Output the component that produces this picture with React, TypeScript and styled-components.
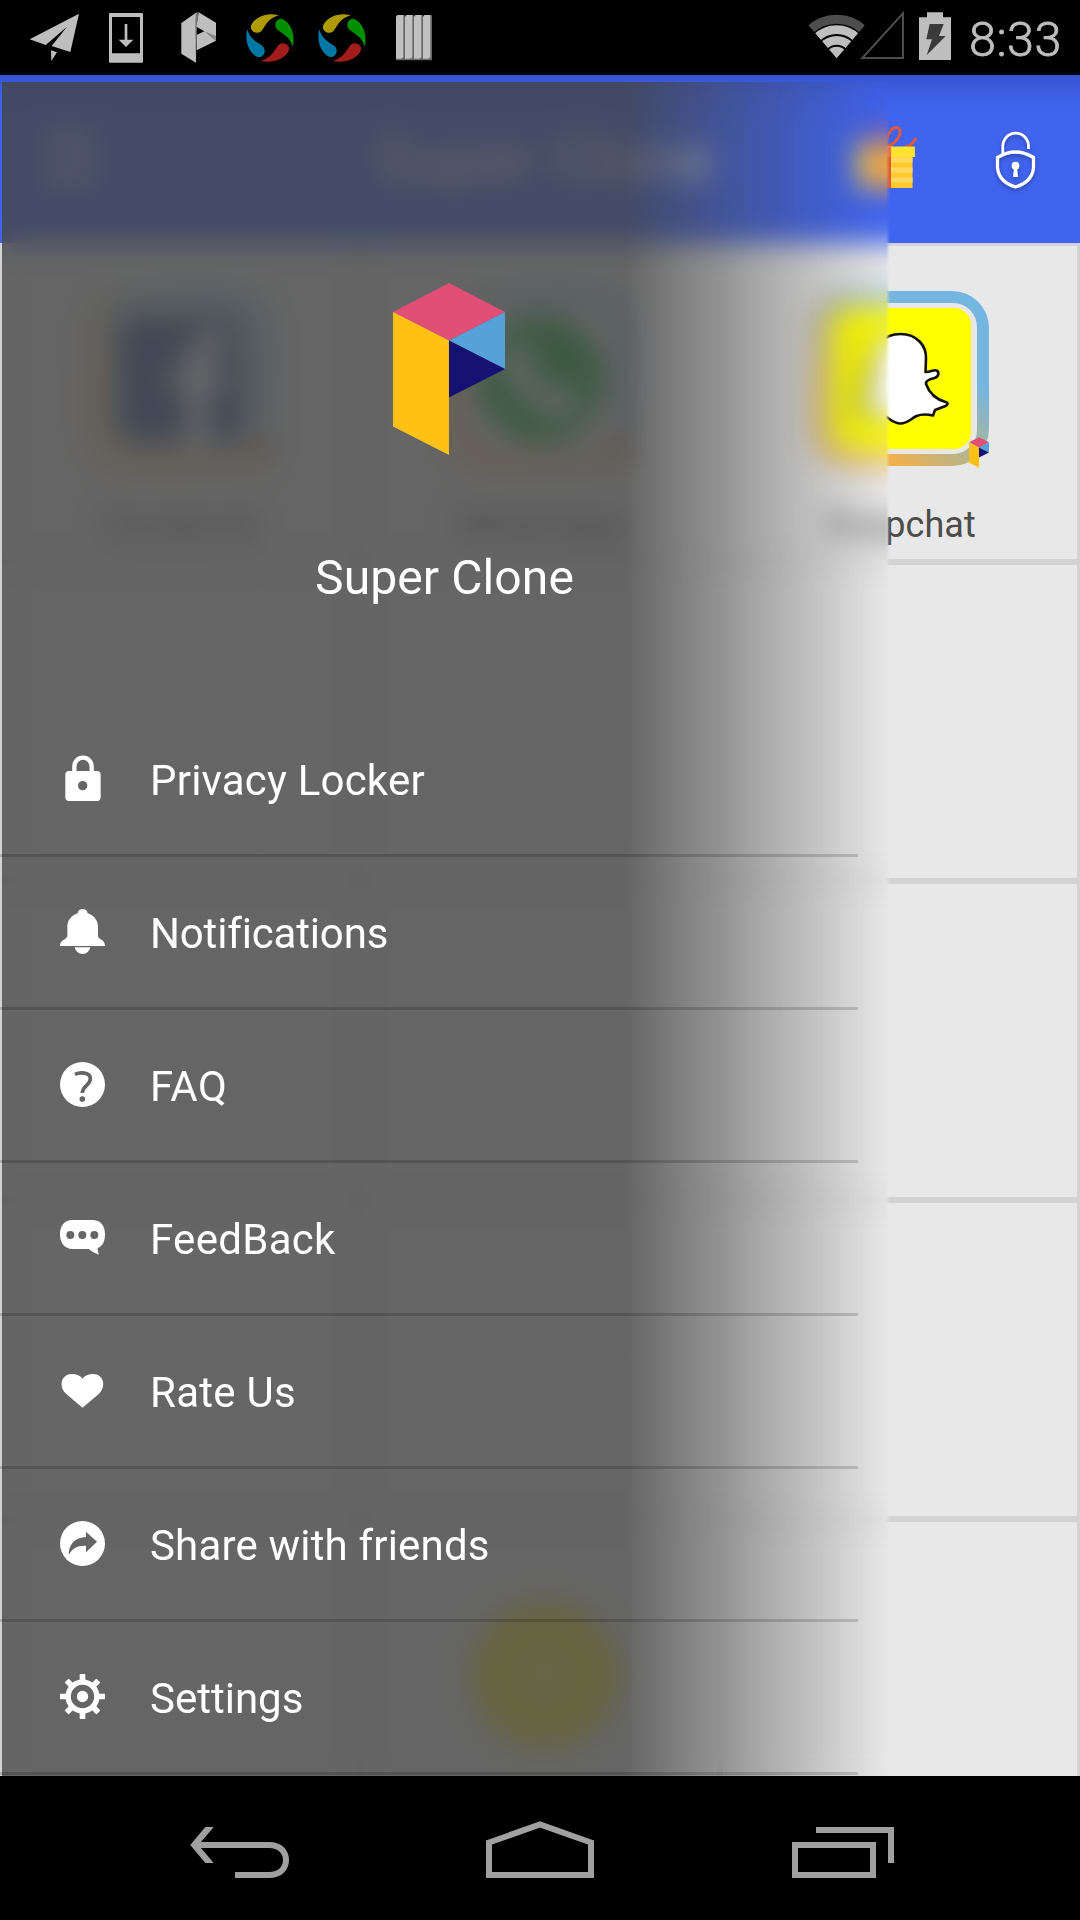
import React from "react";
import styled, { createGlobalStyle } from "styled-components";

const Global = createGlobalStyle`
  * { box-sizing: border-box; }
  body { margin: 0; background: #000; }
`;

const Phone = styled.div`
  width: 1080px;
  height: 1920px;
  display: flex;
  flex-direction: column;
  overflow: hidden;
  background: #000;
  font-family: Roboto, "Noto Sans", sans-serif;
`;

const StatusBar = styled.header`
  height: 75px;
  flex: none;
  display: flex;
  justify-content: space-between;
  padding-right: 20px;
`;

const StatusGroup = styled.div`
  display: flex;
`;

const Clock = styled.div`
  width: 91px;
  font-size: 48.5px;
  line-height: 79px;
  font-weight: 300;
  letter-spacing: 0.5px;
  color: #bebebe;
  -webkit-text-stroke: 0.8px #bebebe;
  white-space: nowrap;
`;

const Glyph = styled.svg`
  display: block;
  flex: none;
  overflow: visible;
`;

const Stage = styled.main`
  position: relative;
  height: 1701px;
  flex: none;
  overflow: hidden;
  background: #e8e8e8;
`;

const AppBar = styled.div`
  height: 168px;
  display: grid;
  grid-template-columns: 346px 1fr 340px;
  align-items: center;
  background: linear-gradient(#3755d0 0, #3e60e8 20px, #4064ef 40px);
`;

const Hamburger = styled.div`
  display: flex;
  flex-direction: column;
  gap: 17px;
  width: 56px;
  margin-left: 42px;
`;

const HamburgerLine = styled.span`
  height: 6px;
  background: #fff;
`;

const AppTitle = styled.h1`
  margin: 0;
  text-align: center;
  font-size: 63px;
  font-weight: 400;
  color: #fff;
`;

const Actions = styled.div`
  display: flex;
  align-items: flex-end;
  gap: 81px;
  padding: 0 0 4px 114px;
`;

const Grid = styled.div`
  display: grid;
  grid-template-columns: repeat(3, 360px);
  grid-auto-rows: 319px;
`;

const Cell = styled.div`
  border: 3px solid #d3d3d3;
  background: #e8e8e8;
  display: flex;
  flex-direction: column;
  align-items: center;
  padding-top: 45px;
`;

const AppFrame = styled.div`
  position: relative;
  width: 177px;
  height: 175px;
  border-radius: 37px;
  padding: 12px;
  display: flex;
  background: linear-gradient(45deg, #efb04f 25%, #a9b59b 52%, #74b6e0 72%);
`;

const FrameInner = styled.div`
  flex: 1;
  display: flex;
  align-items: center;
  justify-content: center;
  border-radius: 24px;
  background: #e8e8e8;
`;

const Tile = styled.div<{ $color: string; $round?: boolean; $scale: number }>`
  width: 141px;
  height: 141px;
  border-radius: ${(p) => (p.$round ? "50%" : "17px")};
  background: ${(p) => p.$color};
  transform: scale(${(p) => p.$scale});
`;

const Badge = styled.div`
  position: absolute;
  right: 0;
  bottom: -2px;
`;

const AppLabel = styled.div`
  margin-top: 38px;
  font-size: 36px;
  line-height: 42px;
  letter-spacing: 0.1px;
  color: #4c4c4c;
`;

const Fab = styled.div`
  position: absolute;
  left: 472px;
  bottom: 28px;
  width: 146px;
  height: 146px;
  border-radius: 50%;
  background: #e8e42a;
  display: flex;
  align-items: center;
  justify-content: center;
`;

const Drawer = styled.aside`
  position: absolute;
  left: 0;
  top: 0;
  width: 888px;
  height: 1701px;
`;

const Frost = styled.div`
  position: absolute;
  left: 2px;
  top: 7px;
  width: 1078px;
  height: 1694px;
  backdrop-filter: blur(14px);
  background: linear-gradient(
    to right,
    rgba(68, 68, 68, 0.8) 624px,
    rgba(68, 68, 68, 0) 886px
  );
  mask-image: linear-gradient(to right, #000 884px, transparent 888px);
`;

const DrawerBody = styled.div`
  position: relative;
  display: flex;
  flex-direction: column;
`;

const DrawerHead = styled.div`
  height: 629px;
  padding: 208px 0 0 1px;
  display: flex;
  flex-direction: column;
  align-items: center;
`;

const LogoSlot = styled.div`
  padding-left: 8px;
`;

const DrawerTitle = styled.div`
  margin-top: 95px;
  font-size: 48px;
  line-height: 56px;
  letter-spacing: 0.1px;
  color: #fff;
`;

const MenuRow = styled.div`
  width: 858px;
  height: 153px;
  display: flex;
  align-items: center;
  padding-left: 60px;
  border-bottom: 3px solid rgba(0, 0, 0, 0.16);
`;

const MenuIcon = styled(Glyph)`
  margin-bottom: 2px;
`;

const MenuText = styled.span<{ $track: number }>`
  margin-left: 45px;
  padding-top: 3px;
  font-size: 42px;
  line-height: 50px;
  letter-spacing: ${(p) => p.$track}px;
  color: #fff;
  white-space: nowrap;
`;

const NavBar = styled.nav`
  height: 144px;
  flex: none;
  display: flex;
  padding: 0 90px;
`;

const NavButton = styled.div`
  width: 300px;
  display: flex;
  align-items: center;
  justify-content: center;
`;

const Logo = ({ w, h }: { w: number; h: number }) => (
  <Glyph width={w} height={h} viewBox="393 283 112 172">
    <path fill="#e24f76" d="M449 283L505 312L449 340.5L393 312Z" />
    <path fill="#56a1da" d="M505 312V369L449 340.5Z" />
    <path fill="#151273" d="M449 340.5L505 369L449 397.5Z" />
    <path fill="#ffc214" d="M393 312L449 340.5V455L393 426.5Z" />
  </Glyph>
);

const drop =
  "M836 46C806 37 766 48 753 77C749 94 772 106 785 92C799 75 803 56 836 46Z";

const Swirl = ({ x }: { x: number }) => (
  <g transform={`translate(${x} 0)`}>
    {["#af9a00", "#008f00", "#a31c1c", "#0078a6"].map((c, i) => (
      <path key={c} d={drop} fill={c} transform={`rotate(${i * 90} 810 114)`} />
    ))}
  </g>
);

const NoticeIcons = () => (
  <Glyph width="460" height="75" viewBox="0 0 1380 225">
    <g fill="#bebebe">
      <path d="M89 118L237 41L211 156L155 138L201 80L137 135Z" />
      <path d="M153 151L171 157L154 183Z" />
      <path
        fillRule="evenodd"
        d="M330 39H426Q429 39 429 42V185Q429 188 426 188H330Q327 188 327 185V42Q327 39 330 39ZM336 51V160H420V51Z"
      />
      <path d="M374 72H382V119H400L378 141L356 119H374Z" />
      <path d="M544 69L590 37L588 188L544 161Z" />
      <path d="M596 37L648 68V122L590 151V105L613 94L589 80Z" />
    </g>
    <path fill="#777" d="M588 38L597 37L589 80L587 188L586 60Z" />
    <path fill="#888" d="M613 94L648 108V124Z" />
    <Swirl x={0} />
    <Swirl x={216} />
    {[0, 1, 2, 3].map((i) => (
      <g key={i} transform={`translate(${1188 + i * 27} 0)`}>
        <path fill="#666" d="M2 45H25L27 48V181H0V173Z" />
        <path fill="#c0c0c0" d="M0 50L5 45H22V172L16 176H0Z" />
      </g>
    ))}
  </Glyph>
);

const SystemIcons = () => (
  <Glyph width="189" height="75" viewBox="0 0 567 225">
    <clipPath id="fan">
      <path d="M170 175L66 53V0H274V53Z" />
    </clipPath>
    <g clipPath="url(#fan)" fill="none">
      <circle cx="170" cy="175" r="117.5" stroke="#4d4d4d" strokeWidth="27" />
      <circle cx="170" cy="175" r="86" stroke="#bebebe" strokeWidth="26" />
      <circle cx="170" cy="175" r="54" stroke="#bebebe" strokeWidth="26" />
      <circle cx="170" cy="175" r="35" fill="#bebebe" />
    </g>
    <path d="M247 174H369V40Z" fill="none" stroke="#4d4d4d" strokeWidth="6" />
    <path fill="#bebebe" d="M441 37H489V52H513V180H417V52H441Z" />
    <path fill="#3a3a3a" d="M449 72H491L477 108H497L440 166L456 118H439Z" />
  </Glyph>
);

const Gift = () => (
  <Glyph width="60" height="70" viewBox="854 122 60 70">
    <path
      d="M885 147C887 136 891 127 897 127.500C904 129 899 144 885 147C881 136 878 127 873 128C866 132 874 145 885 147M905 147Q913 145 916 138M865 147Q857 144 855 138"
      fill="none"
      stroke="#e8573c"
      strokeWidth="2.800"
    />
    <rect x="858" y="157" width="54.500" height="31" fill="#ffca2c" />
    <path stroke="#ffd862" strokeWidth="5" d="M858 160H912.500M858 170H912.500M858 180H912.500" />
    <rect x="855" y="146.500" width="60" height="10.500" fill="#ffe32c" />
    <path fill="#f96a4a" d="M880 146.500H891V157H880Z" />
    <path fill="#e2562f" d="M880 157H891V188H880Z" />
  </Glyph>
);

const LockGlyph = styled(Glyph)`
  margin-bottom: 3px;
  filter: drop-shadow(0 2px 2px rgba(0, 0, 0, 0.3));
`;

const ShieldLock = () => (
  <LockGlyph width="42" height="58" viewBox="995 131 42 58">
    <g fill="none" stroke="#fff">
      <path
        d="M1002.800 155V146.500A12.800 13 0 0 1 1028.500 146V149"
        strokeWidth="2.800"
      />
      <path
        d="M997.500 157.500Q1015.500 146.500 1033.500 157.500V168Q1032 182 1015.500 187Q999 182 997.500 168Z"
        strokeWidth="3.300"
      />
    </g>
    <circle cx="1015.500" cy="165.700" r="3.900" fill="#fff" />
    <path fill="#fff" d="M1014 167H1017L1018 177H1013Z" />
  </LockGlyph>
);

const Ghost = () => (
  <Glyph width="141" height="141" viewBox="829.5 307.500 141 141">
    <path
      d="M900 333.500C917 333.500 926 346 925.500 358L925 371.500C929 372 932 369.500 935 369.800C939 370.500 939 376 934 377.500C929 378.500 925 380 925.500 383.500C929 393 936 399 945 401.500C948.500 402.500 947 404.500 945 405.500L934.500 409.500L932.500 415C928 414 921 413.500 916 415.500C910 418.500 907 423 900 423C893 423 890 418.500 884 415.500C879 413.500 872 414 867.500 415L865.500 409.500L855 405.500C853 404.500 851.500 402.500 855 401.500C864 399 871 393 874.500 383.500C875 380 871 378.500 866 377.500C861 376 861 370.500 865 369.800C868 369.500 871 372 875 371.500L874.500 358C874 346 883 333.500 900 333.500Z"
      fill="#fff"
      stroke="#111"
      strokeWidth="2.600"
      strokeLinejoin="round"
    />
  </Glyph>
);

const FacebookMark = () => (
  <Glyph width="141" height="141" viewBox="0 0 141 141">
    <path
      fill="#fff"
      d="M78 141V82H60V62H78V48C78 28 90 20 106 20H124V40H112C104 40 101 44 101 51V62H123L120 82H101V141Z"
    />
  </Glyph>
);

const PhoneMark = () => (
  <Glyph width="141" height="141" viewBox="0 0 141 141">
    <path
      fill="#fff"
      d="M40 34L54 32L64 54L56 64Q64 80 82 87L91 78L112 89Q112 108 94 111Q70 110 48 88Q28 64 30 48Z"
    />
  </Glyph>
);

const apps = [
  { name: "Facebook", color: "#3b5998", scale: 0.9, mark: <FacebookMark /> },
  { name: "WhatsApp", color: "#25b03b", scale: 0.9, round: true, mark: <PhoneMark /> },
  { name: "Snapchat", color: "#ffff00", scale: 1, mark: <Ghost /> },
];

const cut = "#656565";

const menu = [
  {
    label: "Privacy Locker",
    track: 0.2,
    icon: (
      <>
        <path d="M43 50V32A25 26 0 0 1 95 32V50" fill="none" stroke="#fff" strokeWidth="13" />
        <rect x="16" y="45" width="106" height="90" rx="11" />
        <circle cx="68" cy="89" r="14" fill={cut} />
      </>
    ),
  },
  {
    label: "Notifications",
    track: -0.16,
    icon: (
      <>
        <path d="M53 13C54 -4 82 -4 83 13C104 20 114 36 114 54V82Q115 88 124 92Q135 97 135 111H0Q0 97 12 92Q21 88 22 82V54C22 36 32 20 53 13Z" />
        <path d="M44 115H91Q86 135 68 135Q49 135 44 115Z" />
      </>
    ),
  },
  {
    label: "FAQ",
    track: 0.5,
    icon: (
      <>
        <circle cx="67.500" cy="67.500" r="67.500" />
        <path
          d="M45 37C60 30 91 30 91 50C91 70 67 70 67 93"
          fill="none"
          stroke={cut}
          strokeWidth="11"
        />
        <circle cx="67" cy="111" r="8.500" fill={cut} />
      </>
    ),
  },
  {
    label: "FeedBack",
    track: 0.3,
    icon: (
      <>
        <path d="M38 15H97C122 15 135 32 135 58C135 80 128 94 113 99Q112 110 117 119Q99 114 86 102H38C13 102 0 84 0 58C0 32 13 15 38 15Z" />
        {[31, 67, 103].map((x) => (
          <circle key={x} cx={x} cy="60" r="12" fill={cut} />
        ))}
      </>
    ),
  },
  {
    label: "Rate Us",
    track: 0.25,
    icon: (
      <path d="M67.500 119L18 77C-4 57 2 18 36 18Q57 18 67.500 32Q78 18 99 18C133 18 139 57 117 77Z" />
    ),
  },
  {
    label: "Share with friends",
    track: 0.18,
    icon: (
      <>
        <circle cx="67.500" cy="67.500" r="67.500" />
        <path
          fill={cut}
          d="M26 102C26 70 45 49 78 48V32L111 62L78 94V74C52 73 37 82 26 102Z"
        />
      </>
    ),
  },
  {
    label: "Settings",
    track: 0,
    icon: (
      <>
        <circle cx="67.500" cy="67.500" r="43" fill="none" stroke="#fff" strokeWidth="16" />
        <circle cx="67.500" cy="67.500" r="17" />
        {[0, 45, 90, 135].map((a) => (
          <g key={a} transform={`rotate(${a} 67.5 67.5)`}>
            <rect x="59" y="0" width="17" height="22" rx="2" />
            <rect x="59" y="113" width="17" height="22" rx="2" />
          </g>
        ))}
      </>
    ),
  },
];

export default function App() {
  return (
    <Phone>
      <Global />
      <StatusBar>
        <NoticeIcons />
        <StatusGroup>
          <SystemIcons />
          <Clock>8:33</Clock>
        </StatusGroup>
      </StatusBar>
      <Stage>
        <AppBar>
          <Hamburger>
            <HamburgerLine />
            <HamburgerLine />
            <HamburgerLine />
          </Hamburger>
          <AppTitle>Super Clone</AppTitle>
          <Actions>
            <Gift />
            <ShieldLock />
          </Actions>
        </AppBar>
        <Grid>
          {apps.map((a) => (
            <Cell key={a.name}>
              <AppFrame>
                <FrameInner>
                  <Tile $color={a.color} $round={a.round} $scale={a.scale}>
                    {a.mark}
                  </Tile>
                </FrameInner>
                <Badge>
                  <Logo w={20} h={31} />
                </Badge>
              </AppFrame>
              <AppLabel>{a.name}</AppLabel>
            </Cell>
          ))}
          {Array.from({ length: 12 }, (_, i) => (
            <Cell key={i} />
          ))}
        </Grid>
        <Fab>
          <Glyph width="44" height="44" viewBox="0 0 50 50">
            <path d="M25 0V50M0 25H50" stroke="#fff" strokeWidth="5" />
          </Glyph>
        </Fab>
        <Drawer>
          <Frost />
          <DrawerBody>
            <DrawerHead>
              <LogoSlot>
                <Logo w={112} h={172} />
              </LogoSlot>
              <DrawerTitle>Super Clone</DrawerTitle>
            </DrawerHead>
            {menu.map((m) => (
              <MenuRow key={m.label}>
                <MenuIcon width="45" height="45" viewBox="0 0 135 135" fill="#fff">
                  {m.icon}
                </MenuIcon>
                <MenuText $track={m.track}>{m.label}</MenuText>
              </MenuRow>
            ))}
          </DrawerBody>
        </Drawer>
      </Stage>
      <NavBar>
        <NavButton>
          <Glyph width="300" height="144" viewBox="90 1776 300 144">
            <path
              fill="#a0a0a0"
              d="M190.300 1845L205.300 1827H213.700L201 1842H269C282 1842 289 1850 289 1860C289 1870 282 1878 269 1878H235V1872H269C278 1872 283 1867 283 1860C283 1853 278 1848 269 1848H201L213.700 1863H205.300Z"
            />
          </Glyph>
        </NavButton>
        <NavButton>
          <Glyph width="300" height="144" viewBox="390 1776 300 144">
            <path
              d="M489 1875V1842.500L540 1824.500L591 1842.500V1875Z"
              fill="none"
              stroke="#a0a0a0"
              strokeWidth="6"
            />
          </Glyph>
        </NavButton>
        <NavButton>
          <Glyph width="300" height="144" viewBox="690 1776 300 144">
            <path
              d="M795 1845H873V1875H795ZM816 1830H891V1863"
              fill="none"
              stroke="#a0a0a0"
              strokeWidth="6"
            />
          </Glyph>
        </NavButton>
      </NavBar>
    </Phone>
  );
}
